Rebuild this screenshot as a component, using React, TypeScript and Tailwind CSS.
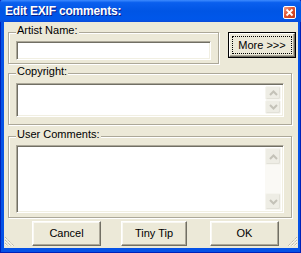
import React from "react";

const bodyBg = "bg-[#ECE9D8]";

function GroupBox({
  label,
  className,
  children,
}: {
  label: string;
  className: string;
  children: React.ReactNode;
}) {
  return (
    <div
      className={`relative border border-[#ACA899] shadow-[inset_1px_1px_0_#fff,1px_1px_0_#fff] ${className}`}
    >
      <span
        className={`absolute left-[7px] top-[-9px] px-[1px] text-[11px] leading-[13px] text-black ${bodyBg}`}
      >
        {label}
      </span>
      {children}
    </div>
  );
}

const sunken =
  "border border-t-[#ACA899] border-l-[#ACA899] border-r-white border-b-white shadow-[inset_1px_1px_0_#716F64,inset_-1px_-1px_0_#F1EFE2] bg-white";

function Chevron({ up }: { up?: boolean }) {
  return (
    <svg width="9" height="6" viewBox="0 0 9 6">
      <path
        d={up ? "M1 5 L4.5 1.5 L8 5" : "M1 1 L4.5 4.5 L8 1"}
        fill="none"
        stroke="#C4C2B8"
        strokeWidth="2"
      />
    </svg>
  );
}

function ScrollButton({ up, h }: { up?: boolean; h: string }) {
  return (
    <div
      className={`${h} w-[16px] flex items-center justify-center rounded-[2px] border border-[#F6F5EF] bg-[#EEEDE5] shadow-[inset_-1px_-1px_0_#E2E1D8]`}
    >
      <Chevron up={up} />
    </div>
  );
}

function Button({
  children,
  className = "",
}: {
  children: React.ReactNode;
  className?: string;
}) {
  return (
    <button
      className={`h-[25px] flex items-center justify-center border border-t-white border-l-white border-r-[#716F64] border-b-[#716F64] shadow-[inset_-1px_-1px_0_#ACA899,inset_1px_1px_0_#F9F8F3] ${bodyBg} text-[11px] text-black ${className}`}
    >
      {children}
    </button>
  );
}

function Grip({ flip }: { flip?: boolean }) {
  return (
    <svg
      width="11"
      height="11"
      viewBox="0 0 11 11"
      className={flip ? "-scale-x-100" : ""}
    >
      {[0, 3, 6].map((o) => (
        <g key={o}>
          <path d={`M${10} ${1 + o} L${1 + o} ${10}`} stroke="#ACA899" strokeWidth="1" strokeDasharray="1 1" />
          <path d={`M${10} ${2 + o} L${2 + o} ${10}`} stroke="#fff" strokeWidth="1" strokeDasharray="1 1" />
        </g>
      ))}
    </svg>
  );
}

export default function App() {
  return (
    <div className="w-[301px] h-[253px] flex flex-col font-['Liberation_Sans',Arial,sans-serif] bg-[#0552E6] shadow-[inset_1px_0_0_#0021B8,inset_-1px_0_0_#0021B8,inset_0_-1px_0_#0021B8]">
      {/* title bar */}
      <div className="h-[22px] flex items-center justify-between pl-[5px] pr-[5px] rounded-t-[3px] bg-[linear-gradient(to_bottom,#3D8BFF_0%,#0A5FEE_12%,#0055E5_50%,#0057EA_88%,#0A49D8_100%)]">
        <span className="text-white font-bold text-[12px] leading-none tracking-[-0.2px] [text-shadow:1px_1px_0_#0A1E8A]">
          Edit EXIF comments:
        </span>
        <div className="w-[13px] h-[13px] mt-[3px] rounded-[2px] border border-white bg-[linear-gradient(135deg,#F0A08A_0%,#E0532F_45%,#C2391A_100%)] flex items-center justify-center">
          <svg width="9" height="9" viewBox="0 0 9 9">
            <path d="M1.5 1.5 L7.5 7.5 M7.5 1.5 L1.5 7.5" stroke="#fff" strokeWidth="1.8" />
          </svg>
        </div>
      </div>

      {/* window body */}
      <div className="flex-1 flex ml-[4px] mr-[3px] mb-[5px]">
        <div className={`relative flex-1 flex flex-col pt-[10px] pl-[4px] ${bodyBg}`}>
          {/* row 1 */}
          <div className="flex items-start">
            <GroupBox label="Artist Name:" className="w-[211px] h-[32px] pt-[8px] pl-[7px]">
              <div className={`w-[195px] h-[19px] ${sunken}`} />
            </GroupBox>
            <button className="ml-[9px] w-[68px] h-[26px] flex border border-black bg-[#ECE9D8]">
              <div className="flex-1 flex border border-t-white border-l-white border-r-[#716F64] border-b-[#716F64] shadow-[inset_-1px_-1px_0_#ACA899]">
                <span className="flex-1 m-[2px] flex items-center justify-center border border-dotted border-black text-[11px] text-black">
                  More &gt;&gt;&gt;
                </span>
              </div>
            </button>
          </div>

          {/* copyright */}
          <GroupBox label="Copyright:" className="mt-[9px] w-[284px] h-[52px] pt-[9px] pl-[7px]">
            <div className={`w-[268px] h-[34px] flex p-[2px] ${sunken}`}>
              <div className="flex-1" />
              <div className="flex flex-col">
                <ScrollButton up h="h-[15px]" />
                <ScrollButton h="h-[15px]" />
              </div>
            </div>
          </GroupBox>

          {/* user comments */}
          <GroupBox label="User Comments:" className="mt-[11px] w-[284px] h-[82px] pt-[8px] pl-[7px]">
            <div className={`w-[268px] h-[68px] flex p-[2px] ${sunken}`}>
              <div className="flex-1" />
              <div className="flex flex-col bg-[#FAF9F5]">
                <ScrollButton up h="h-[17px]" />
                <div className="flex-1" />
                <ScrollButton h="h-[17px]" />
              </div>
            </div>
          </GroupBox>

          {/* buttons */}
          <div className="flex mt-[3px] pl-[24px]">
            <Button className="w-[69px]">Cancel</Button>
            <Button className="w-[66px] ml-[20px]">Tiny Tip</Button>
            <Button className="w-[69px] ml-[23px]">OK</Button>
          </div>

          <div className="absolute left-0 bottom-[1px]">
            <Grip flip />
          </div>
          <div className="absolute right-0 bottom-[1px]">
            <Grip />
          </div>
        </div>
      </div>
    </div>
  );
}
